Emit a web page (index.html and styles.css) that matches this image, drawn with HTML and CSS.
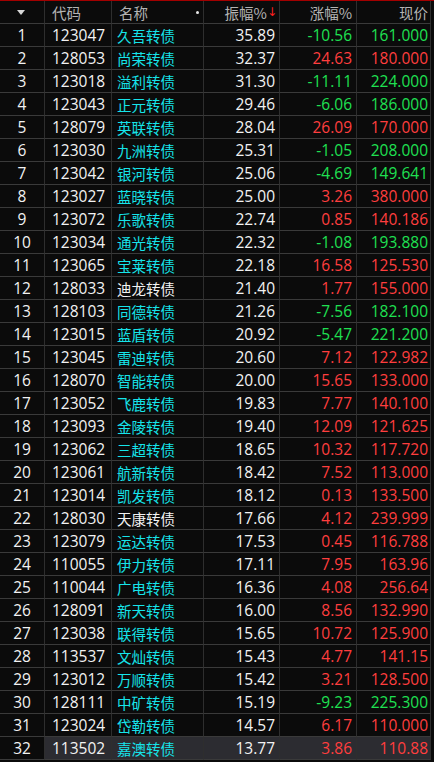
FILE: index.html
```html
<!DOCTYPE html>
<html lang="zh">
<head>
<meta charset="utf-8">
<link rel="stylesheet" href="styles.css">
</head>
<body>
<div class="board">
  <div class="row head">
    <div class="c c1"><span class="tri"></span></div>
    <div class="c c2 l">代码</div>
    <div class="c c3 l">名称<span class="dot"></span></div>
    <div class="c c4">振幅%<span class="arrow">↓</span></div>
    <div class="c c5">涨幅%</div>
    <div class="c c6">现价</div>
  </div>
  <div id="rows"></div>
</div>
<script src="app.js"></script>
</body>
</html>
```
FILE: app.js
```js
const data = [
["123047","久吾转债","35.89","-10.56","161.000"],
["128053","尚荣转债","32.37","24.63","180.000"],
["123018","溢利转债","31.30","-11.11","224.000"],
["123043","正元转债","29.46","-6.06","186.000"],
["128079","英联转债","28.04","26.09","170.000"],
["123030","九洲转债","25.31","-1.05","208.000"],
["123042","银河转债","25.06","-4.69","149.641"],
["123027","蓝晓转债","25.00","3.26","380.000"],
["123072","乐歌转债","22.74","0.85","140.186"],
["123034","通光转债","22.32","-1.08","193.880"],
["123065","宝莱转债","22.18","16.58","125.530"],
["128033","迪龙转债","21.40","1.77","155.000",1],
["128103","同德转债","21.26","-7.56","182.100"],
["123015","蓝盾转债","20.92","-5.47","221.200"],
["123045","雷迪转债","20.60","7.12","122.982"],
["128070","智能转债","20.00","15.65","133.000"],
["123052","飞鹿转债","19.83","7.77","140.100"],
["123093","金陵转债","19.40","12.09","121.625"],
["123062","三超转债","18.65","10.32","117.720"],
["123061","航新转债","18.42","7.52","113.000"],
["123014","凯发转债","18.12","0.13","133.500"],
["128030","天康转债","17.66","4.12","239.999",1],
["123079","运达转债","17.53","0.45","116.788"],
["110055","伊力转债","17.11","7.95","163.96"],
["110044","广电转债","16.36","4.08","256.64"],
["128091","新天转债","16.00","8.56","132.990"],
["123038","联得转债","15.65","10.72","125.900"],
["113537","文灿转债","15.43","4.77","141.15"],
["123012","万顺转债","15.42","3.21","128.500"],
["128111","中矿转债","15.19","-9.23","225.300"],
["123024","岱勒转债","14.57","6.17","110.000"],
["113502","嘉澳转债","13.77","3.86","110.88"]
];
const box = document.getElementById("rows");
data.forEach((d, i) => {
  const row = document.createElement("div");
  row.className = "row" + (i === data.length - 1 ? " sel" : "");
  const cls = d[3].startsWith("-") ? "down" : "up";
  row.innerHTML =
    `<div class="c c1 n">${i + 1}</div>` +
    `<div class="c c2 l n">${d[0]}</div>` +
    `<div class="c c3 l name${d[5] ? " plain" : ""}">${d[1]}</div>` +
    `<div class="c c4 n">${d[2]}</div>` +
    `<div class="c c5 n ${cls}">${d[3]}</div>` +
    `<div class="c c6 n ${cls}">${d[4]}</div>`;
  box.appendChild(row);
});
```
FILE: styles.css
```css
html, body {
  margin: 0;
  padding: 0;
  background: #0b0b0b;
}
body {
  width: 434px;
  height: 762px;
  overflow: hidden;
  font-family: "Open Sans", "Noto Sans CJK SC", sans-serif;
  color: #f2f2f2;
}
.board {
  border-top: 1px solid #a30000;
}
.row {
  display: grid;
  grid-template-columns: 45px 67px 92px 76px 77px 74px;
  height: 23px;
}
.row.head {
  height: 23px;
}
.c {
  box-sizing: border-box;
  border-right: 1px solid #2e2e2e;
  border-bottom: 1px solid #3a3a3a;
  display: flex;
  align-items: center;
  justify-content: flex-end;
  padding-right: 4px;
  font-size: 15.5px;
  white-space: nowrap;
  position: relative;
}
.c1 {
  justify-content: center;
  padding-right: 0;
}
.c6 { padding-right: 2px; }
.l {
  justify-content: flex-start;
}
.c2 { padding-left: 7px; }
.c3 { padding-left: 5px; }
.head .c {
  color: #b4b4b4;
  font-family: "Noto Sans CJK SC", sans-serif;
  font-size: 14.5px;
}
.head .c3 { padding-left: 7px; }
.head .c4 { padding-right: 2px; }
.tri {
  width: 0;
  height: 0;
  border-left: 4.5px solid transparent;
  border-right: 4.5px solid transparent;
  border-top: 5px solid #d8d8d8;
  margin-right: 2px;
}
.dot {
  position: absolute;
  right: 4px;
  top: 10px;
  width: 3px;
  height: 3px;
  border-radius: 50%;
  background: #e8e8e8;
}
.arrow {
  color: #ff2020;
  font-family: "DejaVu Sans", sans-serif;
  font-size: 12px;
  margin-left: 0;
}
.name {
  font-family: "Noto Sans CJK SC", sans-serif;
  font-size: 14.5px;
  color: #16e4ea;
}
.name.plain { color: #f2f2f2; }
.up { color: #ff3e3e; }
.down { color: #1fe052; }
.sel .c:not(.c1) {
  background: #2c2c31;
}
```
